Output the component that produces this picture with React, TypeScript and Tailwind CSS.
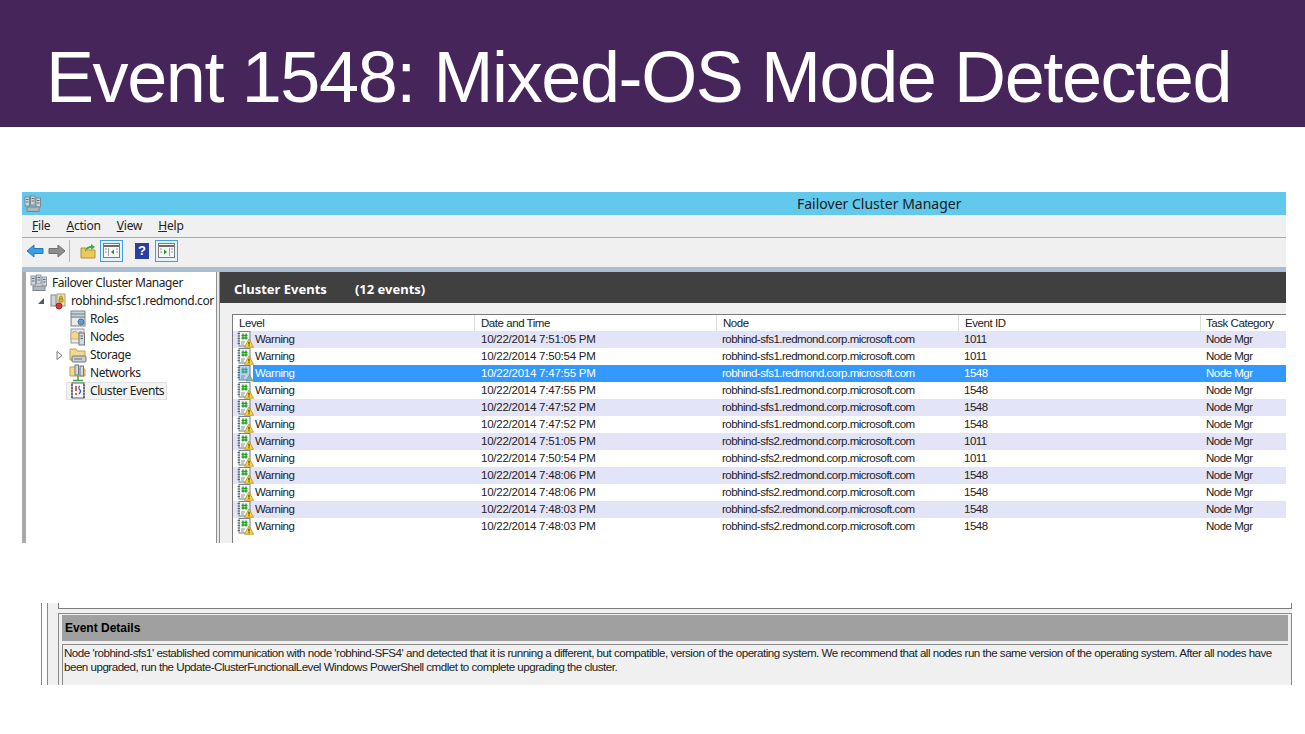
import type { ReactNode } from "react";

const FONT = "font-['Liberation_Sans',Arial,sans-serif]";
const UI = "font-['Noto_Sans','Open_Sans',sans-serif]";

const events = [
  ["10/22/2014 7:51:05 PM", "robhind-sfs1.redmond.corp.microsoft.com", "1011"],
  ["10/22/2014 7:50:54 PM", "robhind-sfs1.redmond.corp.microsoft.com", "1011"],
  ["10/22/2014 7:47:55 PM", "robhind-sfs1.redmond.corp.microsoft.com", "1548"],
  ["10/22/2014 7:47:55 PM", "robhind-sfs1.redmond.corp.microsoft.com", "1548"],
  ["10/22/2014 7:47:52 PM", "robhind-sfs1.redmond.corp.microsoft.com", "1548"],
  ["10/22/2014 7:47:52 PM", "robhind-sfs1.redmond.corp.microsoft.com", "1548"],
  ["10/22/2014 7:51:05 PM", "robhind-sfs2.redmond.corp.microsoft.com", "1011"],
  ["10/22/2014 7:50:54 PM", "robhind-sfs2.redmond.corp.microsoft.com", "1011"],
  ["10/22/2014 7:48:06 PM", "robhind-sfs2.redmond.corp.microsoft.com", "1548"],
  ["10/22/2014 7:48:06 PM", "robhind-sfs2.redmond.corp.microsoft.com", "1548"],
  ["10/22/2014 7:48:03 PM", "robhind-sfs2.redmond.corp.microsoft.com", "1548"],
  ["10/22/2014 7:48:03 PM", "robhind-sfs2.redmond.corp.microsoft.com", "1548"],
];

function ClusterIcon({ tint = "#8d9aa3" }: { tint?: string }) {
  return (
    <svg width="18" height="18" viewBox="0 0 18 18">
      <rect x="1" y="2" width="4.5" height="9" fill="#cfd5d8" stroke={tint} />
      <rect x="6.5" y="1" width="4.5" height="9" fill="#cfd5d8" stroke={tint} />
      <rect x="12" y="3" width="4.5" height="9" fill="#cfd5d8" stroke={tint} />
      <path d="M2 4.5h2.5M2 7h2.5M7.5 3.5H10M7.5 6H10M13 5.5h2.5M13 8h2.5" stroke="#5f6d75" />
      <rect x="3" y="12" width="12" height="4.5" fill="#aeb6ba" stroke="#7b868c" />
    </svg>
  );
}

function WarnIcon({ selected }: { selected: boolean }) {
  return (
    <svg width="17" height="17" viewBox="0 0 17 17" className="shrink-0">
      <rect x="2" y="0.5" width="11" height="14.5" fill={selected ? "#b7d4ec" : "#f4f6f4"} stroke={selected ? "#4f80a8" : "#77848a"} />
      <path d="M0.5 2.5h2.5M0.5 5h2.5M0.5 7.5h2.5M0.5 10h2.5M0.5 12.5h2.5" stroke={selected ? "#3b6f98" : "#5b676d"} strokeWidth="1" />
      <path d="M6 2.5v6M9 2.5v6M4.5 4.5h6M4.5 7h6" stroke={selected ? "#3fa08c" : "#22a022"} strokeWidth="1.3" />
      <path d="M4 11h4M4 13h3" stroke={selected ? "#6c93b0" : "#8b969b"} />
      {selected ? (
        <path d="M12.5 9.5l3.5 6.5H9z" fill="#8db0a0" stroke="#5f8f84" strokeWidth="0.6" />
      ) : (
        <>
          <path d="M12 8l4.6 8.3H7.4z" fill="#f7d23c" stroke="#b98a10" strokeWidth="0.7" />
          <path d="M12 10.8v2.6M12 14.2v1" stroke="#4a3a05" strokeWidth="1.2" />
        </>
      )}
    </svg>
  );
}

function TreeIcon({ kind }: { kind: string }) {
  if (kind === "node") {
    return (
      <svg width="18" height="18" viewBox="0 0 18 18">
        <rect x="2" y="1" width="13" height="14" fill="#e9eaea" stroke="#8e9aa0" />
        <path d="M4 4h3M10 4h3M4 7h3M10 7h3" stroke="#7f8a90" />
        <path d="M2 5l5-2 1 2h7v6H2z" fill="#f3d98f" stroke="#c3a04e" strokeWidth="0.7" />
        <rect x="10" y="5" width="5.5" height="12" fill="#d4d9dc" stroke="#6e7a80" />
        <path d="M11.5 8h2.5M11.5 10.5h2.5" stroke="#59656b" />
      </svg>
    );
  }
  if (kind === "roles") {
    return (
      <svg width="18" height="18" viewBox="0 0 18 18">
        <rect x="2" y="1" width="14" height="15" fill="#c9d2d8" stroke="#7d8a92" />
        <path d="M2 4h14M2 7h14" stroke="#6e7c84" />
        <rect x="3" y="8" width="7" height="7" fill="#e7ecef" />
        <circle cx="12" cy="12" r="3" fill="#6d9ac2" stroke="#4b7396" />
      </svg>
    );
  }
  if (kind === "storage") {
    return (
      <svg width="18" height="18" viewBox="0 0 18 18">
        <path d="M1 3h6l1 2h8v9H1z" fill="#f3d98f" stroke="#c3a04e" />
        <rect x="3" y="10" width="14" height="6" rx="1" fill="#c8cdd0" stroke="#6f7a80" />
        <path d="M5 13h8" stroke="#6f7a80" />
      </svg>
    );
  }
  if (kind === "net") {
    return (
      <svg width="18" height="18" viewBox="0 0 18 18">
        <path d="M1 3h6l1 2h8v7H1z" fill="#f3d98f" stroke="#c3a04e" />
        <rect x="6" y="1" width="3.5" height="10" fill="#d4d9dc" stroke="#6e7a80" />
        <rect x="11" y="2" width="3.5" height="10" fill="#d4d9dc" stroke="#6e7a80" />
        <path d="M9 12v4M4 16.5h10" stroke="#3aa33a" strokeWidth="1.4" />
      </svg>
    );
  }
  return (
    <svg width="18" height="18" viewBox="0 0 18 18">
      <rect x="3" y="1" width="12" height="15" fill="#fbfbfb" stroke="#55606a" />
      <path d="M2 3h2M2 6h2M2 9h2M2 12h2M2 15h2M14 3h2M14 6h2M14 9h2M14 12h2M14 15h2" stroke="#333b42" />
      <path d="M7 4v5M7 11v2" stroke="#d42a2a" strokeWidth="1.5" />
      <path d="M11 4c-2 1-1 3 0 4s0 3-1 4" stroke="#3359c4" strokeWidth="1.2" fill="none" />
    </svg>
  );
}

function ToggleIcon({ right }: { right?: boolean }) {
  return (
    <div className="flex h-[22px] w-[23px] items-center justify-center border border-[#3fa0e0] bg-[#e3f1fb]">
      <svg width="17" height="15" viewBox="0 0 17 15">
        <rect x="0.5" y="0.5" width="16" height="14" fill="#f5f5f5" stroke="#7b7b7b" />
        <path d="M1 3h15" stroke="#6b6b6b" strokeWidth="2" />
        <path d={right ? "M11.5 5v8" : "M5.5 5v8"} stroke="#a0a0a0" />
        <path d={right ? "M6 6.5v5l3-2.5z" : "M11 6.5v5l-3-2.5z"} fill="#2f8f3a" />
        <path d="M2 6h2M2 9h2M13 6h2M13 9h2" stroke="#9a9a9a" />
      </svg>
    </div>
  );
}

function TreeRow({ kind, label, arrow, active }: { kind: string; label: string; arrow?: boolean; active?: boolean }) {
  return (
    <div className="flex h-[18px] items-center pl-[27px]">
      <span className="flex w-[13px] justify-center">
        {arrow && (
          <svg width="7" height="9" viewBox="0 0 7 9">
            <path d="M1 .5l5 4-5 4z" fill="#fff" stroke="#7a7a7a" />
          </svg>
        )}
      </span>
      <span className={`flex h-[18px] items-center gap-[3px] pl-[2px] pr-[2px] ${active ? "border border-[#e2e2e2] bg-[#f2f2f2]" : "border border-transparent"}`}>
        <TreeIcon kind={kind} />
        <span>{label}</span>
      </span>
    </div>
  );
}

function Cell({ children, w, tight }: { children: ReactNode; w: string; tight?: boolean }) {
  return (
    <div className={`${w} shrink-0 truncate ${tight ? "pl-[5px] tracking-[-0.5px]" : "pl-[6px] tracking-[-0.24px]"}`}>{children}</div>
  );
}

function EventRow({ row, i }: { row: string[]; i: number }) {
  const selected = i === 2;
  const shaded = [0, 4, 6, 8, 10].includes(i);
  const bg = shaded ? "bg-[#e3e4f7]" : "bg-white";
  return (
    <div className={`flex h-[17px] items-center ${bg}`}>
      <div className="flex w-[242px] shrink-0 items-center pl-[4px]">
        <WarnIcon selected={selected} />
      </div>
      <div className={`-ml-[222px] flex h-[17px] flex-1 items-center ${selected ? "bg-[#3399ff] text-white" : ""}`}>
        <div className="w-[222px] shrink-0 pl-[2px] tracking-[-0.4px]">Warning</div>
        <Cell w="w-[242px]">{row[0]}</Cell>
        <Cell w="w-[242px]" tight>{row[1]}</Cell>
        <Cell w="w-[242px]" tight>{row[2]}</Cell>
        <Cell w="w-[86px]" tight>Node Mgr</Cell>
      </div>
    </div>
  );
}

function ColumnHead({ label, w }: { label: string; w: string }) {
  return <div className={`${w} h-full shrink-0 border-r border-[#dcdcdc] pl-[6px] leading-[16px] tracking-[-0.45px]`}>{label}</div>;
}

export default function App() {
  return (
    <div className={`h-[734px] w-[1305px] overflow-hidden bg-white ${FONT}`}>
      <header className="flex h-[127px] items-center bg-[#46255a] pl-[46px] pt-[26px]">
        <h1 className="text-[72px] leading-none tracking-[-1.4px] text-white">Event 1548: Mixed-OS Mode Detected</h1>
      </header>

      <section className="ml-[22px] mt-[65px] flex h-[351px] w-[1264px] flex-col overflow-hidden bg-[#f0f0f0]">
        <div className="flex h-[23px] shrink-0 items-center bg-[#63c9ec] pl-[2px]">
          <ClusterIcon tint="#7a8a94" />
          <span className={`ml-[755px] text-[14px] text-[#1a1a1a] ${UI}`}>Failover Cluster Manager</span>
        </div>
        <nav className={`flex h-[23px] shrink-0 items-center gap-[16px] border-b border-[#a9a9a9] pl-[10px] text-[12px] tracking-[-0.2px] text-[#222] ${UI}`}>
          <span><u>F</u>ile</span>
          <span><u>A</u>ction</span>
          <span><u>V</u>iew</span>
          <span><u>H</u>elp</span>
        </nav>
        <div className="flex h-[29px] shrink-0 items-center pb-[4px] pl-[4px]">
          <svg width="18" height="14" viewBox="0 0 18 14">
            <path d="M1 7l7-6v3.5h9v5H8V13z" fill="#3a9fe0" stroke="#2379b5" />
          </svg>
          <svg width="18" height="14" viewBox="0 0 18 14" className="ml-[4px]">
            <path d="M17 7l-7-6v3.5H1v5h9V13z" fill="#8d8d8d" stroke="#6f6f6f" />
          </svg>
          <div className="ml-[3px] h-[22px] w-px bg-[#b5b5b5]" />
          <svg width="16" height="16" viewBox="0 0 16 16" className="ml-[10px]">
            <path d="M1 5h5l1 2h8v8H1z" fill="#e9c85e" stroke="#b59432" />
            <path d="M5 9c0-4 3-6 6-6V1l4 3-4 3V5c-2 0-4 1-6 4z" fill="#3fae3f" />
          </svg>
          <div className="ml-[4px]"><ToggleIcon /></div>
          <div className="ml-[12px] flex h-[16px] w-[14px] items-center justify-center bg-[#2b3f9e] text-[13px] font-bold leading-none text-white">?</div>
          <div className="ml-[6px]"><ToggleIcon right /></div>
        </div>
        <div className="h-[5px] shrink-0 bg-[#a9bdd3]" />

        <div className="flex min-h-0 flex-1">
          <div className="w-[4px] shrink-0 bg-[#a9a9a9]" />
          <aside className={`w-[190px] shrink-0 overflow-hidden bg-white text-[12px] tracking-[-0.42px] text-[#222] ${UI}`}>
            <div className="flex h-[20px] items-center gap-[4px] whitespace-nowrap pl-[4px] pt-[1px]">
              <ClusterIcon />
              <span>Failover Cluster Manager</span>
            </div>
            <div className="flex h-[18px] items-center whitespace-nowrap pl-[11px]">
              <svg width="8" height="8" viewBox="0 0 8 8">
                <path d="M7 1v6H1z" fill="#595959" />
              </svg>
              <span className="ml-[5px] flex items-center gap-[4px]">
                <svg width="17" height="17" viewBox="0 0 17 17">
                  <rect x="1" y="2" width="5" height="11" fill="#cfd5d8" stroke="#7f8c94" />
                  <rect x="7" y="1" width="8" height="12" fill="#f0e2ae" stroke="#a8a070" />
                  <path d="M9.5 6V4.5a1.5 1.5 0 013 0V6M9 6h4v3H9z" fill="#e0b52e" stroke="#8a6a10" strokeWidth="0.6" />
                  <circle cx="9" cy="13" r="3" fill="#d63b3b" stroke="#9b1f1f" />
                </svg>
                <span>robhind-sfsc1.redmond.cor</span>
              </span>
            </div>
            <TreeRow kind="roles" label="Roles" />
            <TreeRow kind="node" label="Nodes" />
            <TreeRow kind="storage" label="Storage" arrow />
            <TreeRow kind="net" label="Networks" />
            <TreeRow kind="events" label="Cluster Events" active />
          </aside>
          <div className="w-[4px] shrink-0 border-x border-[#8f8f8f] bg-[#e8e8e8]" />

          <main className="flex min-w-0 flex-1 flex-col">
            <div className={`flex h-[31px] shrink-0 items-center bg-[#404040] pl-[14px] pt-[4px] text-[13px] font-bold text-white ${UI}`}>
              <span>Cluster Events</span>
              <span className="ml-[28px]">(12 events)</span>
            </div>
            <div className="flex min-h-0 flex-1 pl-[12px] pt-[11px]">
              <div className="flex-1 overflow-hidden border-l border-t border-[#7a7a7a] bg-white text-[11.5px] text-[#222]">
                <div className="flex h-[16px] items-stretch">
                  <ColumnHead label="Level" w="w-[242px]" />
                  <ColumnHead label="Date and Time" w="w-[242px]" />
                  <ColumnHead label="Node" w="w-[242px]" />
                  <ColumnHead label="Event ID" w="w-[242px]" />
                  <div className="w-[86px] shrink-0 pl-[5px] leading-[16px] tracking-[-0.45px]">Task Category</div>
                </div>
                {events.map((row, i) => (
                  <EventRow key={i} row={row} i={i} />
                ))}
              </div>
            </div>
          </main>
        </div>
      </section>

      <section className="ml-[41px] mt-[60px] flex h-[82px] w-[1250px] border-l border-[#8a8a8a] bg-white">
        <div className="w-[5px] shrink-0" />
        <div className="flex flex-1 flex-col border-l border-[#8a8a8a] bg-[#f0f0f0] pl-[10px]">
          <div className="h-[6px] w-full border-b border-l border-r border-[#7c7c7c] bg-white" />
          <div className="mt-[4px] flex min-h-0 flex-1 flex-col border-l border-r border-t border-[#8a8a8a] px-[3px] pt-px">
            <div className="flex h-[26px] shrink-0 items-center bg-[#a0a0a0] pl-[3px] text-[12px] font-bold text-black">
              Event Details
            </div>
            <div className="mt-[3px] flex-1 border-l border-t border-[#8a8a8a] pl-[1px] pt-px text-[11.6px] leading-[14px] tracking-[-0.5px] text-[#222]">
              <p className="w-[1224px]">
                Node 'robhind-sfs1' established communication with node 'robhind-SFS4' and detected that it is running a different, but compatible, version of the operating system. We recommend that all nodes run the same version of the operating system. After all nodes have been upgraded, run the Update-ClusterFunctionalLevel Windows PowerShell cmdlet to complete upgrading the cluster.
              </p>
            </div>
          </div>
        </div>
      </section>
    </div>
  );
}
